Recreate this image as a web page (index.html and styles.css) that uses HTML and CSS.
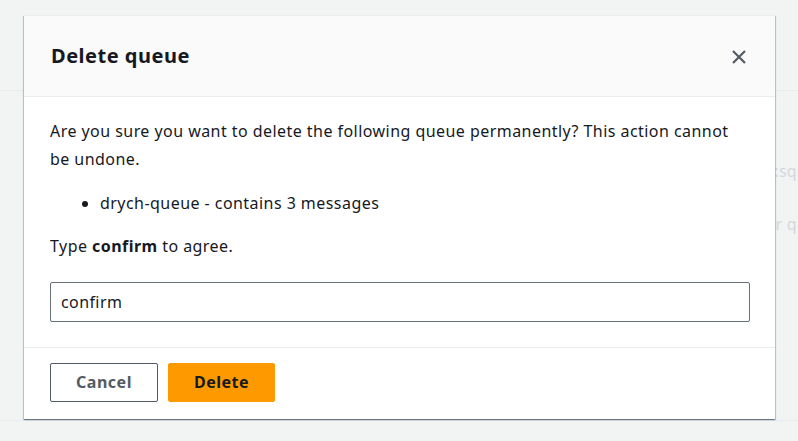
FILE: index.html
```html
<!DOCTYPE html>
<html lang="en">
<head>
<meta charset="utf-8">
<title>Delete queue</title>
<link rel="stylesheet" href="styles.css">
</head>
<body>
<div class="page">
  <div class="bg-top"></div>
  <div class="bg-body">
    <div class="bg-line">n:sq</div>
    <div class="bg-line">er q</div>
  </div>
</div>
<div class="modal" role="dialog" aria-labelledby="modal-title">
  <div class="modal-header">
    <h2 id="modal-title" class="modal-title">Delete queue</h2>
    <button class="close-btn" aria-label="Close">
      <svg width="16" height="16" viewBox="0 0 16 16" aria-hidden="true">
        <path d="M2 2 L14 14 M14 2 L2 14" stroke="#545b64" stroke-width="2.2" fill="none"/>
      </svg>
    </button>
  </div>
  <div class="modal-body">
    <p class="msg">Are you sure you want to delete the following queue permanently? This action cannot be undone.</p>
    <ul class="queue-list">
      <li>drych-queue - contains 3 messages</li>
    </ul>
    <p class="msg msg-type">Type <strong>confirm</strong> to agree.</p>
    <input class="confirm-input" type="text" value="confirm">
  </div>
  <div class="modal-footer">
    <button class="btn btn-cancel">Cancel</button>
    <button class="btn btn-delete">Delete</button>
  </div>
</div>
</body>
</html>
```
FILE: styles.css
```css
* { box-sizing: border-box; }
html, body { margin: 0; padding: 0; }
body {
  width: 798px;
  height: 441px;
  overflow: hidden;
  background: #f2f3f3;
  font-family: "Noto Sans", "Open Sans", sans-serif;
  color: #16191f;
  letter-spacing: 0.45px;
  position: relative;
}
.page { display: flex; flex-direction: column; }
.bg-top {
  height: 91px;
  border-bottom: 1px solid #e9ebed;
}
.bg-body {
  height: 330px;
  border-bottom: 1px solid #e9ebed;
  padding: 69px 1px 0 0;
  display: flex;
  flex-direction: column;
  align-items: flex-end;
  gap: 31px;
}
.bg-line {
  font-size: 16px;
  line-height: 22px;
  color: #d3d8dd;
  letter-spacing: 0.3px;
  white-space: nowrap;
}

.modal {
  position: absolute;
  left: 24px;
  top: 15px;
  width: 751px;
  height: 404px;
  background: #fff;
  border-top: 1px solid #eaeded;
  box-shadow: 0 1px 1px 0 rgba(0,28,36,.35), 1px 1px 1px 0 rgba(0,28,36,.18), -1px 1px 1px 0 rgba(0,28,36,.18);
  display: flex;
  flex-direction: column;
}
.modal-header {
  height: 81px;
  background: #fafafa;
  border-bottom: 1px solid #eaeded;
  display: flex;
  align-items: center;
  justify-content: space-between;
  padding: 0 27px 0 27px;
}
.modal-title {
  margin: 0;
  font-size: 20px;
  font-weight: 700;
  line-height: 24px;
  letter-spacing: 0.5px;
}
.close-btn {
  background: none;
  border: 0;
  padding: 0;
  width: 16px;
  height: 16px;
  display: flex;
  margin-right: 1px;
  margin-top: 2px;
}
.modal-body {
  padding: 20px 26px 25px 26px;
  border-bottom: 1px solid #eaeded;
}
.msg {
  margin: 0;
  font-size: 16px;
  line-height: 28px;
}
.queue-list {
  margin: 16px 0 15px 0;
  padding-left: 50px;
  font-size: 16px;
  line-height: 28px;
}
.msg-type { margin-bottom: 22px; }
.confirm-input {
  display: block;
  width: 700px;
  height: 40px;
  border: 1px solid #687078;
  border-radius: 2px;
  padding: 0 10px;
  font-family: inherit;
  font-size: 16px;
  letter-spacing: 0.4px;
  color: #16191f;
  background: #fff;
}
.modal-footer {
  flex: 1;
  display: flex;
  align-items: flex-start;
  gap: 10px;
  padding: 15px 26px 0 26px;
}
.btn {
  height: 39px;
  border-radius: 2px;
  font-family: inherit;
  font-size: 16px;
  font-weight: 700;
  letter-spacing: 0.5px;
  padding: 0 10px;
  line-height: 37px;
}
.btn-cancel {
  width: 108px;
  background: #fff;
  border: 1px solid #545b64;
  color: #545b64;
}
.btn-delete {
  width: 107px;
  background: #ff9900;
  border: 1px solid #ff9900;
  color: #16191f;
}
```
